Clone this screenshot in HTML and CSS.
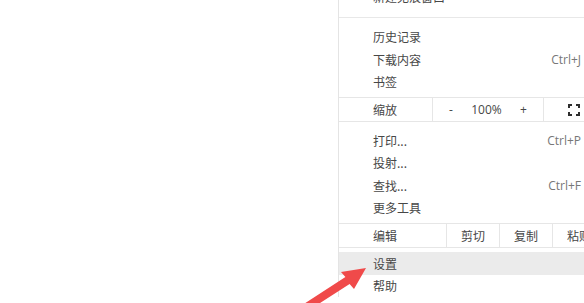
FILE: index.html
```html
<!DOCTYPE html>
<html lang="zh">
<head>
<meta charset="utf-8">
<link rel="stylesheet" href="styles.css">
</head>
<body>
<div class="menu">
  <div class="item"><span>新建无痕窗口</span></div>
  <div class="sep"></div>
  <div class="item"><span>历史记录</span></div>
  <div class="item"><span>下载内容</span><span class="key">Ctrl+J</span></div>
  <div class="item"><span>书签</span></div>
  <div class="row zoomrow">
    <div class="zlabel">缩放</div>
    <div class="zctrl"><span>-</span><span>100%</span><span>+</span></div>
    <div class="zfull">
      <svg width="12" height="12" viewBox="0 0 12 12" fill="none" stroke="#2e2e2e" stroke-width="2">
        <path d="M1 4V1h3M8 1h3v3M11 8v3H8M4 11H1V8"/>
      </svg>
    </div>
  </div>
  <div class="item"><span>打印...</span><span class="key">Ctrl+P</span></div>
  <div class="item"><span>投射...</span></div>
  <div class="item"><span>查找...</span><span class="key">Ctrl+F</span></div>
  <div class="item"><span>更多工具</span></div>
  <div class="row editrow">
    <div class="elabel">编辑</div>
    <div class="ecell">剪切</div>
    <div class="ecell">复制</div>
    <div class="ecell">粘贴</div>
  </div>
  <div class="item active"><span>设置</span></div>
  <div class="item"><span>帮助</span></div>
</div>
<svg class="arrow" width="584" height="303" viewBox="0 0 584 303">
  <polygon fill="#f04a4a" points="366,268 341,272 345.4,277.1 302.9,304.6 307.1,311.4 349.6,283.9 354,289"/>
</svg>
</body>
</html>
```
FILE: styles.css
```css
html, body {
  margin: 0;
  padding: 0;
  background: #ffffff;
  overflow: hidden;
  width: 584px;
  height: 303px;
}
body {
  position: relative;
  font-family: "Noto Sans CJK SC", "Noto Sans", sans-serif;
  font-size: 12px;
  color: #474747;
}
.menu {
  margin-left: 338px;
  margin-top: -15px;
  width: 270px;
  border-left: 1px solid #e4e4e4;
  background: #ffffff;
}
.item {
  height: 22.5px;
  display: flex;
  align-items: center;
  justify-content: space-between;
  padding: 0 28px 0 34px;
  white-space: nowrap;
}
.item.active {
  background: #ebebeb;
}
.key {
  color: #777777;
  font-family: "Open Sans", "Noto Sans", sans-serif;
}
.sep {
  height: 1px;
  background: #e8e8e8;
  margin: 9px 0 8px;
}
.row {
  display: flex;
  height: 23px;
  border-top: 1px solid #e6e6e6;
  border-bottom: 1px solid #e6e6e6;
  align-items: stretch;
}
.zoomrow {
  margin: 4px 0 7px;
}
.editrow {
  margin: 4px 0 4px;
}
.zlabel {
  width: 94px;
  box-sizing: border-box;
  padding-left: 34px;
  border-right: 1px solid #e6e6e6;
  display: flex;
  align-items: center;
}
.zctrl {
  width: 111px;
  box-sizing: border-box;
  padding: 0 16px;
  display: flex;
  align-items: center;
  justify-content: space-between;
  border-right: 1px solid #e6e6e6;
  font-family: "Open Sans", "Noto Sans", sans-serif;
}
.zfull {
  display: flex;
  align-items: center;
  padding-left: 24px;
}
.elabel {
  width: 108px;
  box-sizing: border-box;
  padding-left: 34px;
  border-right: 1px solid #e6e6e6;
  display: flex;
  align-items: center;
}
.ecell {
  width: 53px;
  box-sizing: border-box;
  border-right: 1px solid #e6e6e6;
  display: flex;
  align-items: center;
  justify-content: center;
}
.arrow {
  position: absolute;
  left: 0;
  top: 0;
  pointer-events: none;
}
```
